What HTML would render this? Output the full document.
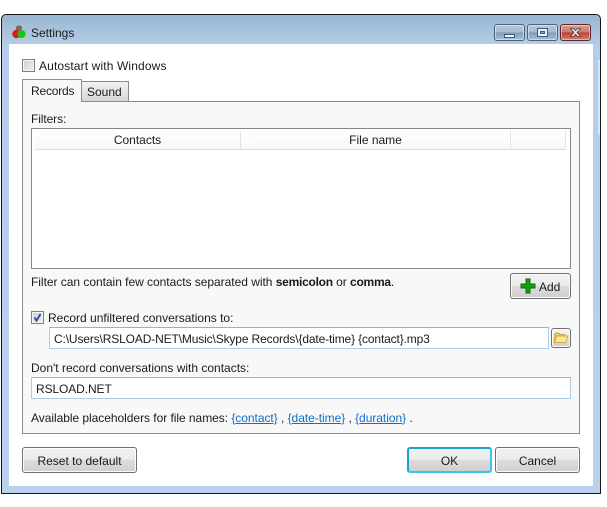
<!DOCTYPE html>
<html><head><meta charset="utf-8">
<style>
html,body{margin:0;padding:0;background:#fff;width:607px;height:507px;overflow:hidden}
*{box-sizing:border-box}
body{font:12px/16px "Liberation Sans",sans-serif;color:#1a1a1a;position:relative}
.a{position:absolute}
.t{position:absolute;white-space:nowrap}
.btn{position:absolute;border:1px solid #707070;border-radius:3px;background:linear-gradient(#f2f2f2 0,#ebebeb 48%,#dddddd 50%,#cfcfcf 100%);box-shadow:inset 0 0 0 1px #fbfbfb;text-align:center}
.tb{position:absolute;background:#fff;border:1px solid #abcde6;border-top-color:#8fb4d2}
.cb{position:absolute;width:13px;height:13px;border:1px solid #7f8080;background:linear-gradient(135deg,#cfcfcf,#f0f0f0);box-shadow:inset 0 0 0 1px #f4f4f4}
a{color:#0f6fc6;text-decoration:underline}
.wb{position:absolute;top:24px;height:17px;border:1px solid #50617a;border-radius:3px;box-shadow:inset 0 0 0 1px rgba(255,255,255,.45)}
</style></head><body>
<div class="a" style="left:1px;top:14px;width:600px;height:480px;border:1px solid #15191d;border-radius:5px 5px 0 0;background:linear-gradient(#99b6d2 0,#b5cde6 30px,#b9d1ea 100%)"></div>
<div class="a" style="left:598px;top:60px;width:2px;height:75px;background:#d7e6f4"></div>
<div class="a" style="left:9px;top:44px;width:584px;height:442px;background:#fff"></div>

<svg class="a" style="left:11px;top:24px" width="16" height="16" viewBox="0 0 16 16">
<path d="M5 7V3.500Q5 1.500 8 1.500T11 3.500V7z" fill="#6f6f6f"/>
<circle cx="5.500" cy="10" r="4.200" fill="#e01a10"/><circle cx="10.500" cy="10" r="4" fill="#1cc414"/></svg>
<div class="t" style="left:31px;top:25px">Settings</div>

<div class="wb" style="left:494px;width:31px;background:linear-gradient(#b2c8dd 0,#a3bcd5 48%,#7d9cba 50%,#a4c0da 100%)"><div class="a" style="left:9px;top:9px;width:11px;height:4px;background:#f0f3f6;border:1px solid #46566c"></div></div>
<div class="wb" style="left:527px;width:31px;background:linear-gradient(#b2c8dd 0,#a3bcd5 48%,#7d9cba 50%,#a4c0da 100%)"><div class="a" style="left:9px;top:3px;width:11px;height:9px;background:#f0f3f6;border:1px solid #46566c"><div class="a" style="left:2px;top:2px;width:5px;height:3px;background:#8ea6bd;border:1px solid #46566c"></div></div></div>
<div class="wb" style="left:560px;width:31px;border-color:#5a2a33;background:linear-gradient(#dd9a8d 0,#cf7b6d 48%,#b7432f 50%,#d0806f 100%)"><svg class="a" style="left:8px;top:1px" width="13" height="13" viewBox="0 0 13 13"><path d="M1.500 2.500H4.500L6.500 4.800 8.500 2.500H11.500L8 6.500 11.500 10.500H8.500L6.500 8.200 4.500 10.500H1.500L5 6.500z" fill="#f2f2f2" stroke="#4a3a40" stroke-width=".8"/></svg></div>

<div class="cb" style="left:22px;top:59px"></div>
<div class="t" style="left:39px;top:58px;letter-spacing:.13px">Autostart with Windows</div>

<div class="a" style="left:22px;top:101px;width:558px;height:333px;background:#f8f8f8;border:1px solid #898c95"></div>
<div class="a" style="left:81px;top:81px;width:48px;height:21px;border:1px solid #898c95;background:linear-gradient(#f2f2f2,#d6d6d6)"></div>
<div class="a" style="left:22px;top:79px;width:60px;height:23px;border:1px solid #898c95;border-bottom:0;background:#f8f8f8"></div>
<div class="t" style="left:31px;top:83px;letter-spacing:-.2px">Records</div>
<div class="t" style="left:87px;top:84px">Sound</div>

<div class="t" style="left:31px;top:111px;letter-spacing:-.1px">Filters:</div>
<div class="a" style="left:31px;top:128px;width:540px;height:141px;background:#fff;border:1px solid #828790"></div>
<div class="a" style="left:35px;top:130px;width:531px;height:20px;background:linear-gradient(#fff,#f7f8f9);border-bottom:1px solid #dcdcdc;border-right:1px solid #e4e4e4"></div>
<div class="a" style="left:240px;top:131px;width:1px;height:18px;background:#e4e4e4"></div>
<div class="a" style="left:510px;top:131px;width:1px;height:18px;background:#e4e4e4"></div>
<div class="t" style="left:35px;top:132px;width:205px;text-align:center">Contacts</div>
<div class="t" style="left:241px;top:132px;width:269px;text-align:center">File name</div>

<div class="t" style="left:31px;top:274px;letter-spacing:-.03px">Filter can contain few contacts separated with <b style="letter-spacing:-.25px">semicolon</b> or <b style="letter-spacing:-.25px">comma</b>.</div>

<div class="btn" style="left:510px;top:273px;width:61px;height:26px"></div>
<svg class="a" style="left:520px;top:278px" width="16" height="16" viewBox="0 0 16 16"><path d="M6 1H10V6H15V10H10V15H6V10H1V6H6z" fill="#12a012" stroke="#0b6b0b"/></svg>
<div class="t" style="left:539px;top:279px">Add</div>

<div class="cb" style="left:31px;top:311px"></div>
<svg class="a" style="left:31px;top:311px" width="13" height="13" viewBox="0 0 13 13"><path d="M3.500 6.500L5.500 9.500 9.500 3" fill="none" stroke="#2f4f9f" stroke-width="2"/></svg>
<div class="t" style="left:48px;top:310px">Record unfiltered conversations to:</div>

<div class="tb" style="left:49px;top:327px;width:500px;height:22px"></div>
<div class="t" style="left:54px;top:331px;letter-spacing:-.14px">C:\Users\RSLOAD-NET\Music\Skype Records\{date-time} {contact}.mp3</div>
<div class="btn" style="left:551px;top:328px;width:20px;height:20px"></div>
<svg class="a" style="left:553px;top:331px" width="16" height="14" viewBox="0 0 16 14"><path d="M1.500 3.500Q1.500 2 3 2H6L7.500 3.500H12V5H4L1.500 11.500z" fill="#e6c860" stroke="#c4a030" stroke-width=".7"/><path d="M4 5H15L12.500 11.500H1.500z" fill="#fbe98f" stroke="#c4a030" stroke-width=".7"/></svg>

<div class="t" style="left:31px;top:360px">Don't record conversations with contacts:</div>
<div class="tb" style="left:31px;top:377px;width:540px;height:22px"></div>
<div class="t" style="left:36px;top:381px;letter-spacing:-.1px">RSLOAD.NET</div>

<div class="t" style="left:31px;top:410px;letter-spacing:-.04px">Available placeholders for file names: <a>{contact}</a> , <a>{date-time}</a> , <a>{duration}</a> .</div>

<div class="btn" style="left:22px;top:447px;width:115px;height:26px;line-height:26px">Reset to default</div>
<div class="btn" style="left:407px;top:447px;width:85px;height:26px;line-height:24px;border:2px solid #2fb7dc;border-color:#1aa3c9 #35c8ee #35c8ee #1aa3c9;box-shadow:none">OK</div>
<div class="btn" style="left:495px;top:447px;width:85px;height:26px;line-height:26px">Cancel</div>
</body></html>
